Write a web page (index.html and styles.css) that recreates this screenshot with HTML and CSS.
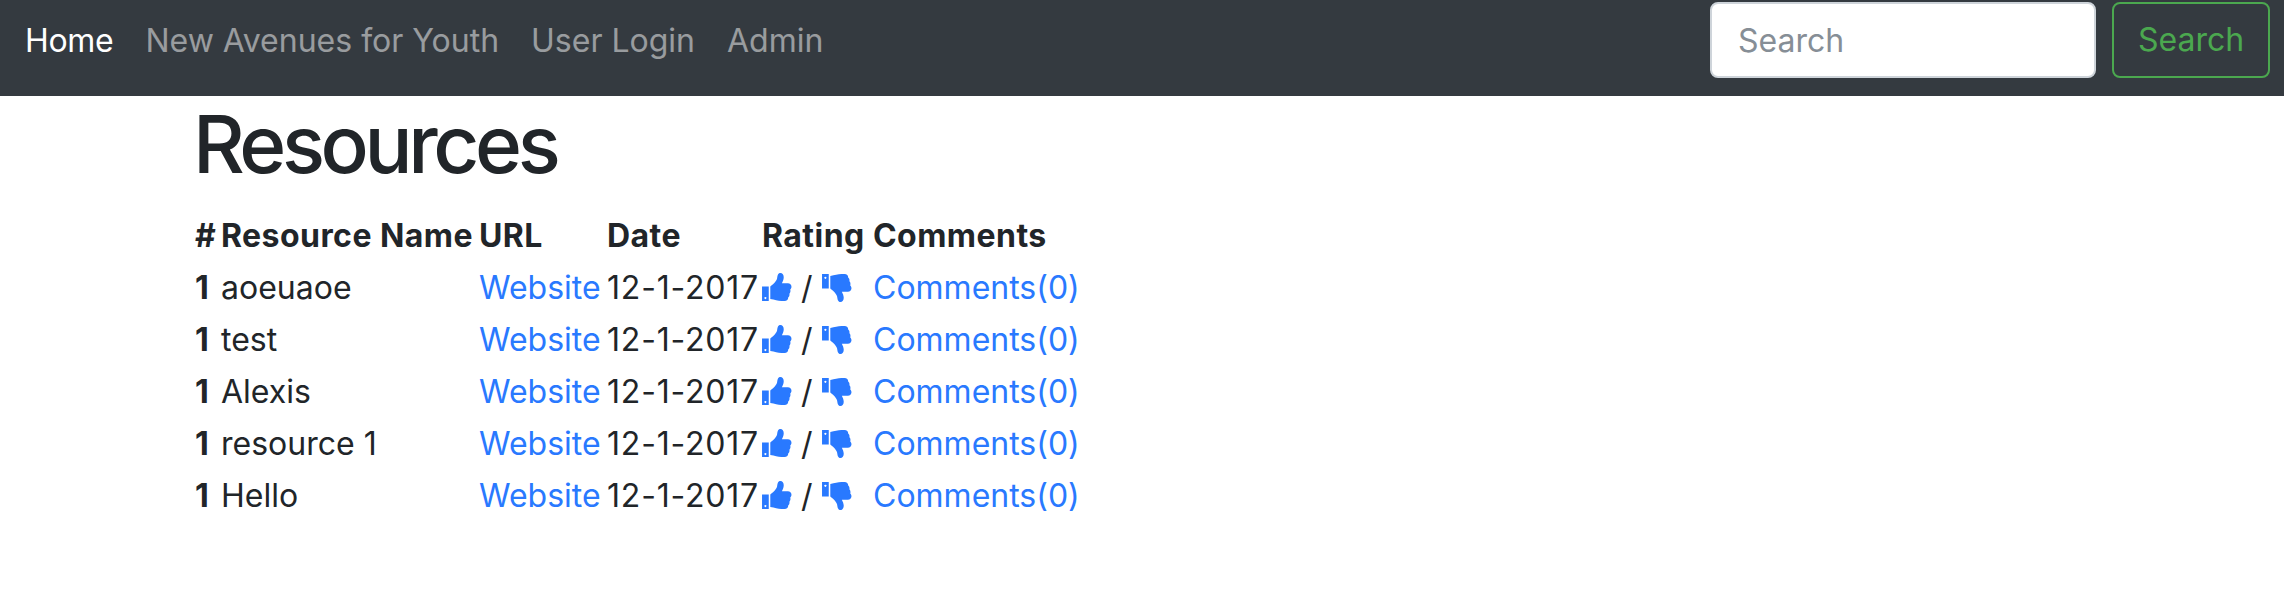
FILE: index.html
```html
<!DOCTYPE html>
<html lang="en">
<head>
    <meta charset="UTF-8">
    <meta name="viewport" content="width=device-width, initial-scale=1.0">
    <title>Resources</title>
    <link rel="stylesheet" href="styles.css">
</head>
<body>
    <nav class="navbar">
        <ul class="nav-links">
            <li><a class="nav-link active" href="#">Home</a></li>
            <li><a class="nav-link" href="#">New Avenues for Youth</a></li>
            <li><a class="nav-link" href="#">User Login</a></li>
            <li><a class="nav-link" href="#">Admin</a></li>
        </ul>
        <form class="search-form">
            <input class="search-input" type="text" placeholder="Search">
            <button class="search-button" type="button">Search</button>
        </form>
    </nav>

    <svg class="icon-defs" width="0" height="0" aria-hidden="true">
        <symbol id="thumb-up" viewBox="0 0 30 30">
            <path fill-rule="evenodd" d="M1 14h6.500v14H1zM4.200 24.200a1 1 0 1 0 .1 0zM9 14c2-1.500 5.500-4.500 6.500-7.500.5-1.800.3-4.500 2.500-5.500 2.500-.5 4 1.500 4 4 0 2.500-1 4.200-1.800 6h5.800c2 0 3.500 1.500 3.500 3.300 0 1-.5 2-1.200 2.700.5 1.500.2 3-.8 4 .3 1.500-.2 2.800-1.200 3.600.1 2-1.300 3.400-3.500 3.400h-3c-3.500 0-6.500-1.200-10.800-1.800z"/>
        </symbol>
        <symbol id="thumb-down" viewBox="0 0 30 30">
            <path fill-rule="evenodd" d="M1 2h6.500v14H1zM4.200 4.500a1 1 0 1 0 .1 0zM9 16c2 1.500 5.500 4.500 6.500 7.500.5 1.800.3 4.500 2.500 5.500 2.500.5 4-1.500 4-4 0-2.500-1-4.200-1.800-6h5.800c2 0 3.500-1.500 3.500-3.300 0-1-.5-2-1.200-2.700.5-1.500.2-3-.8-4 .3-1.500-.2-2.800-1.200-3.600.1-2-1.300-3.400-3.500-3.400h-3c-3.500 0-6.500 1.200-10.800 1.800z"/>
        </symbol>
    </svg>

    <main class="container">
        <h1>Resources</h1>
        <table class="resource-table">
            <colgroup>
                <col class="col-num">
                <col class="col-name">
                <col class="col-url">
                <col class="col-date">
                <col class="col-rating">
                <col class="col-comments">
            </colgroup>
            <thead>
                <tr>
                    <th>#</th>
                    <th>Resource Name</th>
                    <th>URL</th>
                    <th>Date</th>
                    <th>Rating</th>
                    <th>Comments</th>
                </tr>
            </thead>
            <tbody>
                <tr>
                    <th>1</th>
                    <td>aoeuaoe</td>
                    <td><a href="#">Website</a></td>
                    <td class="date">12-1-2017</td>
                    <td><a href="#"><svg class="thumb"><use href="#thumb-up"/></svg></a> / <a class="thumb-down" href="#"><svg class="thumb"><use href="#thumb-down"/></svg></a></td>
                    <td><a href="#">Comments(0)</a></td>
                </tr>
                <tr>
                    <th>1</th>
                    <td>test</td>
                    <td><a href="#">Website</a></td>
                    <td class="date">12-1-2017</td>
                    <td><a href="#"><svg class="thumb"><use href="#thumb-up"/></svg></a> / <a class="thumb-down" href="#"><svg class="thumb"><use href="#thumb-down"/></svg></a></td>
                    <td><a href="#">Comments(0)</a></td>
                </tr>
                <tr>
                    <th>1</th>
                    <td>Alexis</td>
                    <td><a href="#">Website</a></td>
                    <td class="date">12-1-2017</td>
                    <td><a href="#"><svg class="thumb"><use href="#thumb-up"/></svg></a> / <a class="thumb-down" href="#"><svg class="thumb"><use href="#thumb-down"/></svg></a></td>
                    <td><a href="#">Comments(0)</a></td>
                </tr>
                <tr>
                    <th>1</th>
                    <td>resource 1</td>
                    <td><a href="#">Website</a></td>
                    <td class="date">12-1-2017</td>
                    <td><a href="#"><svg class="thumb"><use href="#thumb-up"/></svg></a> / <a class="thumb-down" href="#"><svg class="thumb"><use href="#thumb-down"/></svg></a></td>
                    <td><a href="#">Comments(0)</a></td>
                </tr>
                <tr>
                    <th>1</th>
                    <td>Hello</td>
                    <td><a href="#">Website</a></td>
                    <td class="date">12-1-2017</td>
                    <td><a href="#"><svg class="thumb"><use href="#thumb-up"/></svg></a> / <a class="thumb-down" href="#"><svg class="thumb"><use href="#thumb-down"/></svg></a></td>
                    <td><a href="#">Comments(0)</a></td>
                </tr>
            </tbody>
        </table>
    </main>
</body>
</html>
```

FILE: styles.css
```css
body {
    margin: 0;
    background: #fff;
    color: #212529;
    font-family: 'Inter', sans-serif;
    font-size: 32px;
    line-height: 48px;
}

a {
    color: #2979ff;
    text-decoration: none;
}

.navbar {
    display: flex;
    justify-content: space-between;
    align-items: flex-start;
    height: 96px;
    padding: 2px 14px 0 9px;
    box-sizing: border-box;
    background: #343a40;
}

.nav-links {
    display: flex;
    margin: 0;
    padding: 15px 0 0;
    list-style: none;
}

.nav-link {
    display: block;
    padding: 0 16px;
    color: rgba(255, 255, 255, 0.5);
}

.nav-link.active {
    color: #fff;
    letter-spacing: -0.3px;
}

.search-form {
    display: flex;
    gap: 16px;
}

.search-input {
    width: 386px;
    height: 76px;
    padding: 0 26px;
    box-sizing: border-box;
    border: 2px solid #ced4da;
    border-radius: 8px;
    background: #fff;
    font: inherit;
}

.search-input::placeholder {
    color: #868e96;
}

.search-button {
    width: 158px;
    height: 76px;
    padding: 0;
    border: 2px solid #4ba84f;
    border-radius: 8px;
    background: transparent;
    color: #4ba84f;
    font: inherit;
}

.container {
    padding: 0 195px;
}

h1 {
    margin: 0 0 18px -2px;
    font-size: 80px;
    font-weight: 500;
    letter-spacing: -4.4px;
    line-height: 96px;
}

.resource-table {
    border-collapse: collapse;
    table-layout: fixed;
}

.col-num { width: 26px; }
.col-name { width: 258px; }
.col-url { width: 128px; }
.col-date { width: 155px; }
.col-rating { width: 111px; }
.col-comments { width: 220px; }

.resource-table th,
.resource-table td {
    padding: 2px 0;
    text-align: left;
    white-space: nowrap;
}

.resource-table th {
    font-weight: 700;
}

.resource-table thead th {
    letter-spacing: 0.45px;
}

.resource-table .date {
    letter-spacing: 0.8px;
}

.icon-defs {
    display: block;
    height: 0;
}

.thumb {
    width: 31px;
    height: 31px;
    margin-left: -1px;
    fill: #2979ff;
    vertical-align: -4px;
}

.thumb-down .thumb {
    margin-left: -1px;
}
```
